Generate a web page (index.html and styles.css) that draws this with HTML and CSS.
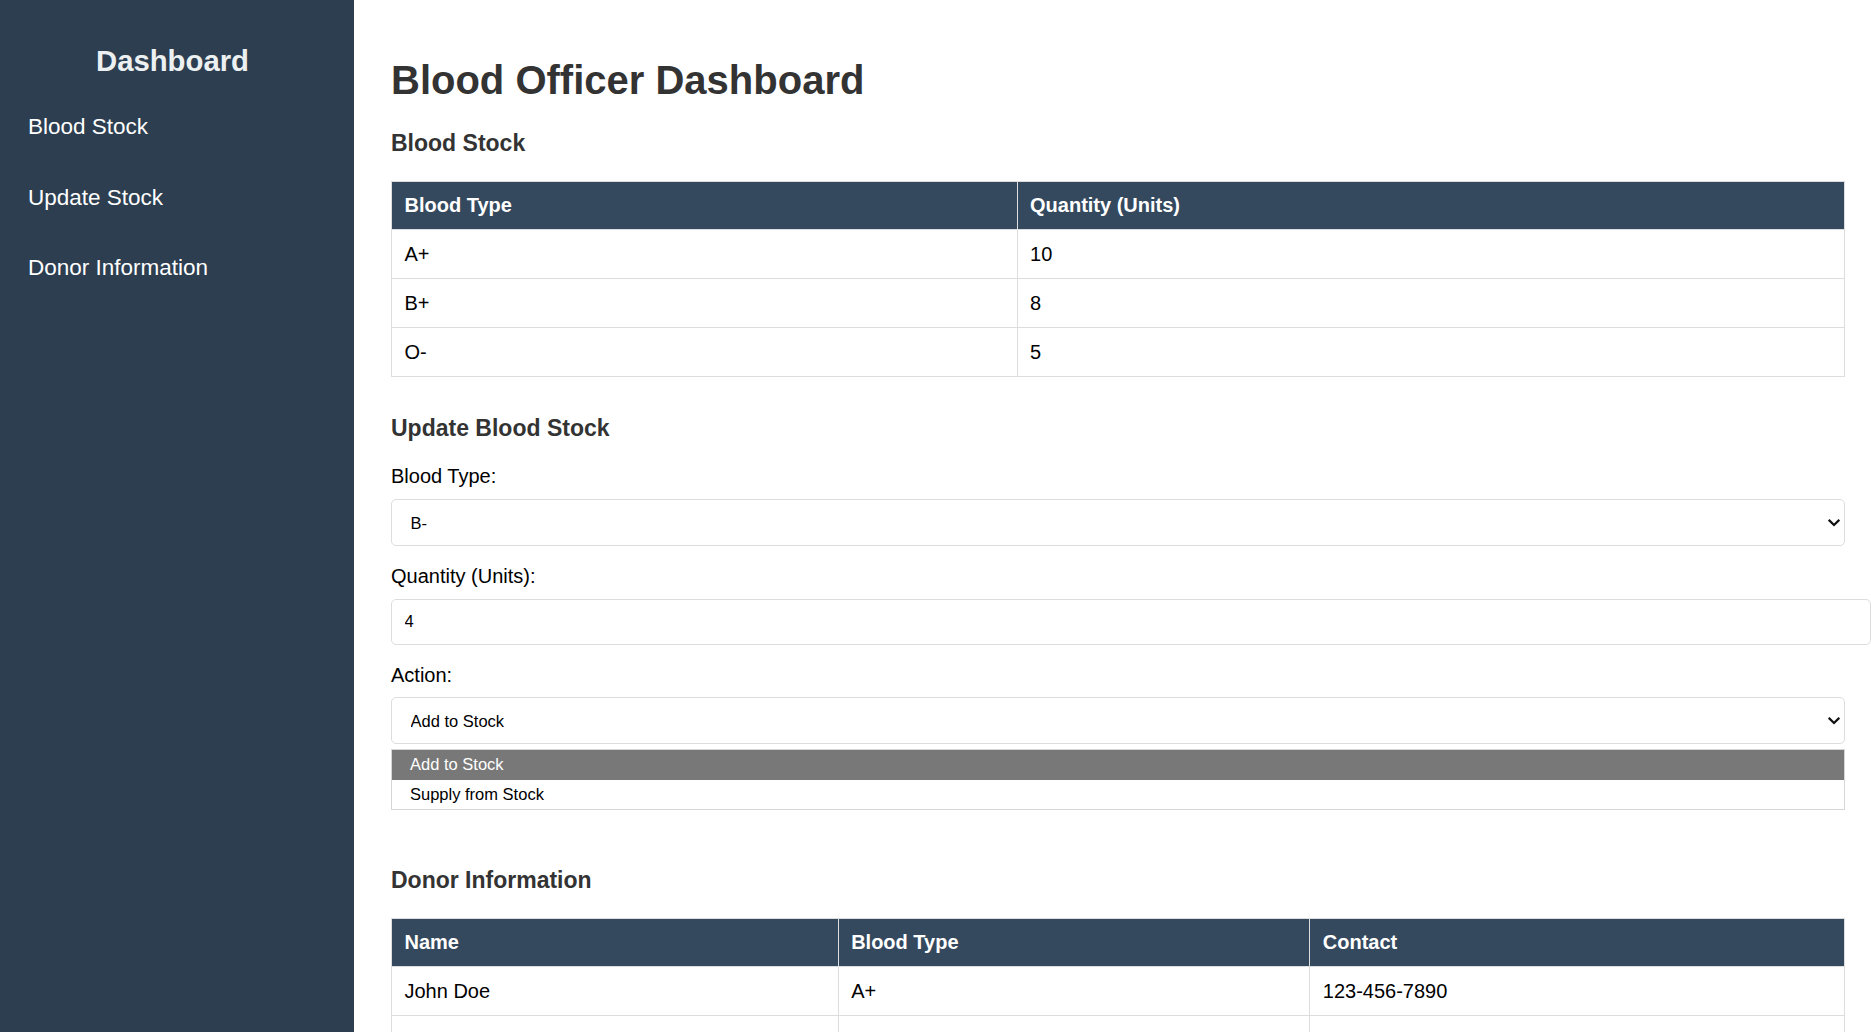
FILE: index.html
```html
<!DOCTYPE html>
<html lang="en">
<head>
<meta charset="utf-8">
<title>Blood Officer Dashboard</title>
<link rel="stylesheet" href="styles.css">
</head>
<body>
<div class="layout">
  <aside class="sidebar">
    <h2 class="brand">Dashboard</h2>
    <nav class="nav">
      <a class="nav-link" href="#stock">Blood Stock</a>
      <a class="nav-link" href="#update">Update Stock</a>
      <a class="nav-link" href="#donors">Donor Information</a>
    </nav>
  </aside>
  <main class="main">
    <h1 class="page-title">Blood Officer Dashboard</h1>

    <section id="stock" class="section section-stock">
      <h3 class="section-title">Blood Stock</h3>
      <table class="data-table">
        <thead>
          <tr><th class="col-stock-type">Blood Type</th><th>Quantity (Units)</th></tr>
        </thead>
        <tbody>
          <tr><td>A+</td><td>10</td></tr>
          <tr><td>B+</td><td>8</td></tr>
          <tr><td>O-</td><td>5</td></tr>
        </tbody>
      </table>
    </section>

    <section id="update" class="section section-update">
      <h3 class="section-title section-title-form">Update Blood Stock</h3>
      <form class="form">
        <div class="field">
          <label class="field-label" for="bloodType">Blood Type:</label>
          <div class="select-wrap">
            <select id="bloodType" class="control select">
              <option>A+</option>
              <option>A-</option>
              <option>B+</option>
              <option selected>B-</option>
              <option>O+</option>
              <option>O-</option>
              <option>AB+</option>
              <option>AB-</option>
            </select>
            <svg class="chevron" width="12" height="8" viewBox="0 0 12 8" aria-hidden="true"><path d="M1.5 1.6 L6 6 L10.5 1.6" fill="none" stroke="#111" stroke-width="2.2" stroke-linecap="square"/></svg>
          </div>
        </div>
        <div class="field">
          <label class="field-label" for="quantity">Quantity (Units):</label>
          <input id="quantity" class="control input" type="number" value="4">
        </div>
        <div class="field field-last">
          <label class="field-label" for="action">Action:</label>
          <div class="select-wrap">
            <select id="action" class="control select">
              <option selected>Add to Stock</option>
              <option>Supply from Stock</option>
            </select>
            <svg class="chevron" width="12" height="8" viewBox="0 0 12 8" aria-hidden="true"><path d="M1.5 1.6 L6 6 L10.5 1.6" fill="none" stroke="#111" stroke-width="2.2" stroke-linecap="square"/></svg>
            <ul class="dropdown">
              <li class="dropdown-option is-active">Add to Stock</li>
              <li class="dropdown-option">Supply from Stock</li>
            </ul>
          </div>
        </div>
      </form>
    </section>

    <section id="donors" class="section section-donors">
      <h3 class="section-title section-title-donors">Donor Information</h3>
      <table class="data-table">
        <thead>
          <tr><th class="col-name">Name</th><th class="col-donor-type">Blood Type</th><th>Contact</th></tr>
        </thead>
        <tbody>
          <tr><td>John Doe</td><td>A+</td><td>123-456-7890</td></tr>
          <tr><td>Jane Smith</td><td>B+</td><td>987-654-3210</td></tr>
        </tbody>
      </table>
    </section>
  </main>
</div>
</body>
</html>
```

FILE: styles.css
```css
html {
  scrollbar-width: none;
}

body {
  margin: 0;
  font-family: "Liberation Sans", Arial, sans-serif;
  color: #000;
  background: #fff;
}

.layout {
  display: flex;
  align-items: stretch;
  min-height: 100vh;
}

/* Sidebar */
.sidebar {
  flex: 0 0 354px;
  width: 354px;
  box-sizing: border-box;
  padding: 43px 37px 0 28px;
  background: #2c3e50;
  color: #fff;
}

.brand {
  margin: 0;
  font-size: 29.3px;
  line-height: 35px;
  font-weight: bold;
  text-align: center;
  color: #ecf0f1;
}

.nav {
  display: flex;
  flex-direction: column;
  margin-top: 14px;
}

.nav-link {
  display: block;
  padding: 22.25px 0;
  font-size: 22.5px;
  line-height: 26px;
  color: #fff;
  text-decoration: none;
}

/* Main */
.main {
  flex: 1;
  min-width: 0;
  padding: 0 26px 0 37px;
}

.page-title {
  margin: 57px 0 0;
  font-size: 40px;
  line-height: 46px;
  font-weight: bold;
  color: #333;
}

.section-stock {
  margin-top: 26.5px;
}

.section-update {
  margin-top: 38px;
}

.section-donors {
  margin-top: 122.75px;
}

.section-title {
  margin: 0 0 24.5px;
  font-size: 23px;
  line-height: 27px;
  font-weight: bold;
  color: #333;
}

.section-title-form {
  margin-bottom: 22.5px;
}

.section-title-donors {
  margin-bottom: 24.15px;
}

/* Tables */
.data-table {
  width: 100%;
  border-collapse: collapse;
  font-size: 20px;
  line-height: 23px;
}

.data-table th,
.data-table td {
  border: 1px solid #ddd;
  padding: 12.5px;
  text-align: left;
}

.data-table th {
  background: #34495e;
  color: #fff;
  font-weight: bold;
  padding-top: 12px;
  padding-bottom: 12px;
}

.col-stock-type {
  width: 43.05%;
}

.col-name {
  width: 30.74%;
}

.col-donor-type {
  width: 32.46%;
}

/* Form */
.form {
  margin: 0;
}

.field {
  margin-bottom: 19px;
}

.field-last {
  margin-bottom: 0;
}

.field-label {
  display: block;
  margin-bottom: 10.4px;
  font-size: 20px;
  line-height: 23px;
  color: #000;
}

.field:first-child .field-label {
  margin-bottom: 11.4px;
}

.control {
  display: block;
  box-sizing: border-box;
  margin: 0;
  border: 1px solid #ddd;
  border-radius: 5px;
  background: #fff;
  font-family: "Liberation Sans", Arial, sans-serif;
  font-size: 16.5px;
  color: #000;
  outline: none;
}

.select-wrap {
  position: relative;
}

.select {
  width: 100%;
  height: 47.4px;
  padding: 0 30px 0 18.5px;
  appearance: none;
  -webkit-appearance: none;
}

.input {
  width: calc(100% + 26px);
  height: 46px;
  padding: 0 12.5px;
  appearance: textfield;
  -moz-appearance: textfield;
}

.input::-webkit-inner-spin-button,
.input::-webkit-outer-spin-button {
  -webkit-appearance: none;
  margin: 0;
}

.chevron {
  position: absolute;
  right: 5px;
  top: 50%;
  margin-top: -3.5px;
  pointer-events: none;
}

/* Open select popup */
.dropdown {
  position: absolute;
  top: calc(100% + 5px);
  left: 0;
  right: 0;
  margin: 0;
  padding: 0;
  list-style: none;
  background: #fff;
  border: 1px solid #d6d6d6;
  z-index: 5;
}

.dropdown-option {
  height: 29.5px;
  padding-left: 18px;
  font-size: 16.5px;
  line-height: 29.5px;
  color: #000;
}

.dropdown-option.is-active {
  background: #787878;
  color: #fff;
}
```
